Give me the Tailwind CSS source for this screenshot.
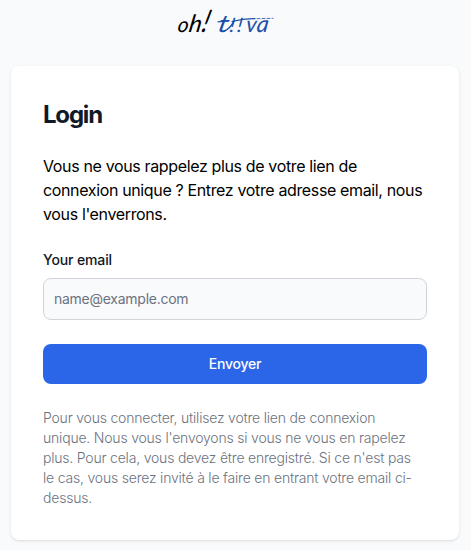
<!DOCTYPE html>
<html lang="fr">

<head>
  <meta charset="UTF-8" />
  <meta name="viewport" content="width=device-width, initial-scale=1.0" />
  <title>oh! tiiva - Login</title>
  <script src="https://cdn.jsdelivr.net/npm/@tailwindcss/browser@4"></script>
</head>

<body class="bg-[#f9fafb] font-['Inter',sans-serif] text-black">
  <main class="flex flex-col h-[550px] w-[470px] items-center overflow-hidden">
    <!-- Logo -->
    <a href="#" class="block h-[66px] mr-5 shrink-0" aria-label="oh! tiiva">
      <svg width="120" height="45" viewBox="165 0 120 45" font-family="Lato, sans-serif" font-style="italic">
        <g fill="#000">
          <text transform="translate(177 32) skewX(-8)" font-size="21">o</text>
          <text transform="translate(188 32) skewX(-10)" font-size="24">h</text>
          <text transform="translate(200.5 32) skewX(-16) scale(.8 1)" font-size="31">!</text>
        </g>
        <g fill="#1d4fa8">
          <text transform="translate(217 32) skewX(-12) scale(1.2 1)" font-size="24">t</text>
          <!-- upside-down i pair, dots under the stems -->
          <text transform="translate(229 32) skewX(-8)" x="0 7.5" y="0" font-size="20">!!</text>
          <text transform="translate(245.5 32) skewX(-6)" font-size="22">v</text>
          <text transform="translate(256 32) skewX(-8)" font-size="23">a</text>
        </g>
        <g fill="none" stroke="#1d4fa8" stroke-linecap="round">
          <path d="M224 31.2Q230 29 234 21" stroke-width="1.5" />
          <path d="M218 21.8L229 20.6M232 21.5Q243 18.5 255 18.7" stroke-width="1.2" />
          <path d="M257 18.7L273 18.3" stroke-width=".8" stroke-dasharray="3 2" />
        </g>
      </svg>
    </a>

    <!-- Login -->
    <section class="w-md shrink-0 bg-white rounded-lg shadow-sm p-8 space-y-6">
      <h1 class="pt-px -mb-px text-2xl font-bold tracking-[-1.2px] text-[#111827]">Login</h1>
      <p class="mt-6 text-base tracking-[-0.36px]">Vous ne vous rappelez plus de votre lien de connexion unique ? Entrez votre adresse email, nous vous l'enverrons.</p>
      <form class="space-y-6">
        <div>
          <label for="email" class="block mb-2 text-sm font-medium tracking-[-0.12px] text-[#111827]">Your email</label>
          <input type="email" id="email" placeholder="name@example.com"
            class="block w-full h-[42px] px-2.5 pb-0.5 bg-[#f9fafb] border border-[#d1d5db] rounded-lg text-sm tracking-[-0.26px] placeholder:text-[#6b7280]" />
        </div>
        <button type="button" class="w-full h-10 bg-[#2b65e8] text-white text-sm font-medium tracking-[-0.2px] rounded-lg">Envoyer</button>
        <p class="pr-2 text-sm font-light tracking-[-0.2px] text-[#6b7280]">Pour vous connecter, utilisez votre lien de connexion unique. Nous vous l'envoyons si vous ne vous en rapelez plus. Pour cela, vous devez être enregistré. Si ce n'est pas le cas, vous serez invité à le faire en entrant votre email ci-dessus.</p>
      </form>
    </section>
  </main>
</body>

</html>
